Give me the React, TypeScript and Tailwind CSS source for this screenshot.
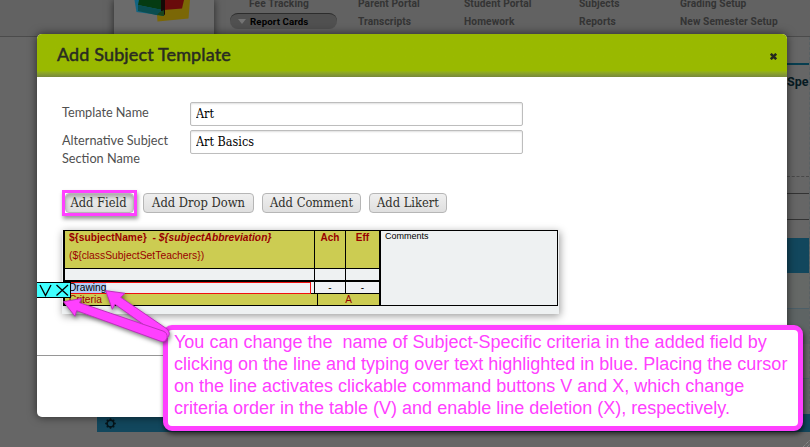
import React from 'react';

const navigation = [
  { top: 'Fee Tracking', bottom: 'Report Cards', active: true, width: 'w-[128px]' },
  { top: 'Parent Portal', bottom: 'Transcripts', width: 'w-[106px]' },
  { top: 'Student Portal', bottom: 'Homework', width: 'w-[115px]' },
  { top: 'Subjects', bottom: 'Reports', width: 'w-[101px]' },
  { top: 'Grading Setup', bottom: 'New Semester Setup', width: 'w-[130px]' },
];

function Logo() {
  return (
    <div className="ml-[114px] h-[48px] w-[100px] shrink-0 bg-[#6b6b6b] shadow-[0_0_8px_rgba(0,0,0,.6)]">
      <svg width="100" height="34" viewBox="114 0 100 34">
        <path d="M134.500 0H163v15.500L136.500 12Z" fill="#126482" />
        <path d="M157 14.500h5l1-14.500h27l-1.500 18.500-31 3Z" fill="#7b6706" />
        <path d="M139 0h23v10l-24-5Z" fill="#053b12" />
        <path d="M138 5l25 5 1 6-8-1-18-4Z" fill="#0a4d50" />
        <path d="M164 0h20l-2 8.500-19 1.500Z" fill="#690b0b" />
        <path d="M161 0h4v15.500l-4-5Z" fill="#160907" />
        <path d="M157 14.500l7 1.500v-6l-4 2Z" fill="#18441c" />
      </svg>
    </div>
  );
}

function Backdrop() {
  return (
    <div className="flex h-[447px] flex-col bg-[#666]">
      <header className="flex h-[37px] shrink-0 border-b border-[#4b4b4b] bg-[#626262]">
        <Logo />
        <nav className="ml-4 flex font-['Roboto','Liberation_Sans',sans-serif] text-[10.2px] font-bold leading-[16px] tracking-[.1px] text-[#343434]">
          {navigation.map((item) => (
            <div key={item.top} className={`${item.width} shrink-0`}>
              <div className={`-mt-[4px] whitespace-nowrap ${item.active ? 'ml-[19px]' : ''}`}>{item.top}</div>
              {item.active ? (
                <div className="mt-px flex h-4 w-[107px] items-center rounded-full border-t border-[#2c2c2c] bg-[#505050] pl-[8px] text-black">
                  <i className="mr-[4px] border-x-[4px] border-t-[5px] border-x-transparent border-t-[#747474]" />
                  <span className="whitespace-nowrap text-[9.7px]">{item.bottom}</span>
                </div>
              ) : (
                <div className="mt-[2px] whitespace-nowrap">{item.bottom}</div>
              )}
            </div>
          ))}
        </nav>
      </header>
      <div className="ml-[787px] flex h-[377px] shrink-0 flex-col border-r border-dashed border-[#596164]">
        <div className="h-[26px]" />
        <div className="h-[2px] bg-[#073e50]" />
        <div className="h-[111px] overflow-hidden pt-[8px] font-['Roboto','Liberation_Sans',sans-serif] text-[12.5px] font-bold leading-[18px] text-[#061b23]">Spe</div>
        <div className="h-[17px] border-t border-dashed border-[#494949]" />
        <div className="h-[27px] border-y border-[#333]" />
        <div className="h-[18px]" />
        <div className="h-[35px] bg-[#12475d]" />
        <div className="h-[35px] bg-[#656866]" />
        <div className="h-[36px] border-t border-[#4c5f68] bg-[#5e6464]" />
        <div className="h-[35px] border-b border-[#4c5f68] bg-[#666]" />
        <div className="grow bg-[#606464]" />
      </div>
      <div className="ml-[97px] flex h-[18px] shrink-0 items-center bg-[#12475d] pl-2">
        <svg width="11" height="11" viewBox="-5.5 -5.5 11 11" fill="none" stroke="#06151b">
          <circle r="3.4" strokeWidth="1.7" />
          <path d="M0-5.3v2M0 3.3v2M-5.3 0h2M3.3 0h2M-3.7-3.7l1.3 1.3M2.4 2.4l1.3 1.3M3.7-3.7L2.4-2.4M-2.4 2.4l-1.3 1.3" strokeWidth="1.5" />
        </svg>
      </div>
      <div className="flex grow items-end justify-end">
        <svg width="7" height="7" stroke="#9a9a9a" strokeDasharray="1 1"><path d="M0 7L7 0M4 7L7 4" /></svg>
      </div>
    </div>
  );
}

function Field({ label, value }: { label: React.ReactNode; value: string }) {
  return (
    <div className="flex h-[28px] items-start">
      <div className="w-[128px] shrink-0 whitespace-nowrap pt-px font-['Lato','Liberation_Sans',sans-serif] text-[12.7px] leading-[18px] text-[#505050]">
        {label}
      </div>
      <input
        readOnly
        value={value}
        className="h-6 w-[333px] rounded-[2px] border border-[#bdbdbd] bg-white px-[5px] pb-px text-[12.5px] text-black shadow-[inset_0_1px_2px_rgba(0,0,0,.13)] outline-none font-['DejaVu_Serif_Condensed','DejaVu_Serif',serif]"
      />
    </div>
  );
}

const buttonStyle =
  "flex h-[20px] items-center justify-center whitespace-nowrap rounded-[4px] border border-[#b6b6b6] bg-linear-to-b from-[#efefef] to-[#dfdfdf] text-[12.8px] text-[#30302b] font-['DejaVu_Serif_Condensed','DejaVu_Serif',serif]";

function SubjectTable() {
  return (
    <div className="ml-[25px] mt-[14px] h-[84px] w-[497px] bg-[#eef1f2] pl-px shadow-[1px_2px_8px_rgba(0,0,0,.4)]">
      <div className="flex h-[76px] w-[495px] border-2 border-b-[1px] border-r-[1px] border-t-[1.5px] border-black text-[10px]">
        <div className="w-[316px] border-r-2 border-black text-[#990000]">
          <div className="grid h-[37px] grid-cols-[249px_31px_34px] bg-[#cccc52] font-bold">
            <div className="pl-[4px] pt-px leading-[12px]">
              <div className="whitespace-pre text-[10.2px] tracking-[.05px]">
                {'${subjectName}  - '}<em>{'${subjectAbbreviation}'}</em>
              </div>
              <div className="mt-[6px] text-[10.35px] font-normal">{'(${classSubjectSetTeachers})'}</div>
            </div>
            <div className="border-l border-black pt-px text-center leading-[12px]">Ach</div>
            <div className="border-l border-black pt-px text-center leading-[12px]">Eff</div>
          </div>
          <div className="grid h-[13px] grid-cols-[249px_31px_34px] border-b border-t border-black">
            <div /><div className="border-l border-black" /><div className="border-l border-black" />
          </div>
          <div className="grid h-[12px] grid-cols-[249px_31px_34px] border-t border-black bg-[#eff1f5] text-black">
            <div className="pl-[3px]">
              <div className="h-[12px] w-[243px] border border-l-0 border-[#f01010] pl-px leading-[10px]">
                <span className="inline-block h-[10px] w-[37px] bg-[#b4cdf8] align-top text-[10.2px]">Drawing</span>
              </div>
            </div>
            <div className="border-l border-black text-center leading-[11px]">-</div>
            <div className="border-l border-black text-center leading-[11px]">-</div>
          </div>
          <div className="grid h-[12px] grid-cols-[252px_62px] border-t border-black bg-[#cccc52] leading-[11px]">
            <div className="pl-[4px] text-[10.2px]">Criteria</div>
            <div className="border-l border-black text-center">A</div>
          </div>
        </div>
        <div className="pl-[4px] text-[9px] leading-[10px] text-black">Comments</div>
      </div>
    </div>
  );
}

function Dialog() {
  return (
    <section className="absolute left-[37px] top-[34px] flex h-[383px] w-[750px] flex-col overflow-hidden rounded-[5px] bg-white">
      <header className="flex h-[43px] shrink-0 items-center justify-between bg-linear-to-b from-[#99b900] from-85% to-[#78883a] pl-5 pr-[10px]">
        <h1 className="pb-[3px] font-['Lato','Liberation_Sans',sans-serif] text-[18px] font-normal tracking-[.13px] text-[#292b22] [-webkit-text-stroke:.5px_#292b22]">Add Subject Template</h1>
        <svg className="mt-[2px]" width="7" height="7" stroke="#26291d" strokeWidth="2.5"><path d="M.8.8l5.400 5.400M6.200.8L.8 6.200" /></svg>
      </header>
      <main className="flex h-[279px] shrink-0 flex-col border-b border-[#969696]">
        <div className="ml-[25px] mt-[25px] h-[80px]">
          <Field label="Template Name" value="Art" />
          <Field label={<>Alternative Subject<br />Section Name</>} value="Art Basics" />
        </div>
        <div className="ml-[25px] mt-[8px] flex h-[26px] items-center">
          <div className="h-[26px] w-[75px] border-[3px] border-[#ff40ff] shadow-[1px_3px_4px_rgba(0,0,0,.4)]">
            <button className={`${buttonStyle} w-full pr-[2px] shadow-[inset_0_3px_4px_rgba(0,0,0,.3)]`}>Add Field</button>
          </div>
          <button className={`${buttonStyle} ml-[6px] w-[111px]`}>Add Drop Down</button>
          <button className={`${buttonStyle} ml-[8px] w-[99px]`}>Add Comment</button>
          <button className={`${buttonStyle} ml-[8px] w-[78px]`}>Add Likert</button>
        </div>
        <SubjectTable />
      </main>
    </section>
  );
}

const calloutLines = [
  'You can change the  name of Subject-Specific criteria in the added field by',
  'clicking on the line and typing over text highlighted in blue. Placing the cursor',
  'on the line activates clickable command buttons V and X, which change',
  'criteria order in the table (V) and enable line deletion (X), respectively.',
];

export default function App() {
  return (
    <div className="relative h-[447px] w-[810px] overflow-hidden font-['Liberation_Sans',Arial,sans-serif]">
      <Backdrop />
      <div className="absolute left-[37px] top-[34px] h-[383px] w-[750px] rounded-[5px] shadow-[0_0_10px_rgba(0,0,0,.6)]" />
      <Dialog />
      <div className="absolute left-[37px] top-[282px] h-[16px] w-[34px] border border-l-0 border-black bg-[#40ffff]">
        <svg width="33" height="14" fill="none" stroke="#000" strokeWidth="1.300"><path d="M3 2l5.500 10.500L14 2M19.500 2l11.500 10.500M31 2L19.500 12.500" /></svg>
      </div>
      <div className="absolute left-[163px] top-[325px] h-[106px] w-[640px] rounded-[9px] border-[5px] border-[#ff40ff] bg-white pl-[6px] pt-px text-[18px] leading-[22px] text-[#ff40ff] shadow-[1px_3px_5px_rgba(0,0,0,.65)]">
        {calloutLines.map((line) => <div key={line} className="whitespace-pre">{line}</div>)}
      </div>
      <svg className="absolute left-[55px] top-[282px] drop-shadow-[1px_2px_2px_rgba(0,0,0,.5)]" width="120" height="68" viewBox="55 282 120 68" fill="#ff40ff" stroke="#bd30bd" strokeWidth="1" strokeLinejoin="round">
        <path d="M105.700 290.700L125 293.300 120.700 297.300 167 329q4 4 1 8-3 3-7 0L115 304.300 112.300 309.300Z" />
        <path d="M63.500 301.700L81.500 298.500 79.500 302.700 163 331q5 2 4 7-2 5-7 3L76.700 310.700 75 316.300Z" />
      </svg>
    </div>
  );
}
